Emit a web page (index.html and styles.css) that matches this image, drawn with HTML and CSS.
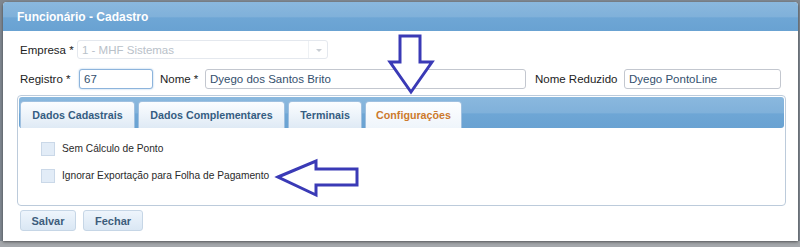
FILE: index.html
```html
<!DOCTYPE html>
<html lang="pt-BR">
<head>
    <meta charset="UTF-8">
    <title>Funcionário - Cadastro</title>
    <link rel="stylesheet" href="styles.css">
</head>
<body>
    <div class="window">
        <div class="title">Funcionário - Cadastro</div>
        <div class="form">
            <div class="row row-empresa">
                <label class="lbl lbl-empresa">Empresa *</label>
                <div class="select disabled">
                    <span>1 - MHF Sistemas</span>
                    <span class="trigger"></span>
                </div>
            </div>
            <div class="row row-registro">
                <label class="lbl lbl-registro">Registro *</label>
                <input class="field f-registro focus" value="67">
                <label class="lbl lbl-nome">Nome *</label>
                <input class="field f-nome" value="Dyego dos Santos Brito">
                <label class="lbl lbl-reduzido">Nome Reduzido</label>
                <input class="field f-reduzido" value="Dyego PontoLine">
            </div>

            <div class="tabpanel">
                <div class="tabbar">
                    <div class="tab t1">Dados Cadastrais</div>
                    <div class="tab t2">Dados Complementares</div>
                    <div class="tab t3">Terminais</div>
                    <div class="tab t4 active">Configurações</div>
                </div>
                <div class="tabbody">
                    <div class="check"><span class="box"></span>Sem Cálculo de Ponto</div>
                    <div class="check"><span class="box"></span>Ignorar Exportação para Folha de Pagamento</div>
                </div>
            </div>

            <div class="buttons">
                <button class="btn btn-salvar">Salvar</button>
                <button class="btn btn-fechar">Fechar</button>
            </div>
        </div>

        <!-- setas de destaque -->
        <svg class="arrow arrow-down" width="52" height="64" viewBox="0 0 52 64">
            <polygon points="15,4 35,4 35,30 47,30 26,60 5,30 15,30" fill="#fff" stroke="#3a3ab6" stroke-width="3" stroke-linejoin="miter"/>
        </svg>
        <svg class="arrow arrow-left" width="88" height="42" viewBox="0 0 88 42">
            <polygon points="5,20 43,4 43,12 84,12 84,28 43,28 43,38" fill="#fff" stroke="#3a3ab6" stroke-width="3" stroke-linejoin="miter"/>
        </svg>
    </div>
    <div class="behind"></div>
</body>
</html>
```

FILE: styles.css
```css
body {
    margin: 0;
    background: #7f8790;
    font-family: "Liberation Sans", Arial, sans-serif;
    font-size: 11.5px;
    width: 800px;
    height: 247px;
    overflow: hidden;
}
.window {
    position: relative;
    margin: 2px 3px 0 3px;
    width: 795px;
    height: 239px;
    background: #fff;
    border-radius: 4px 4px 0 0;
    box-shadow: 0 1px 3px rgba(0, 0, 0, 0.5);
    overflow: hidden;
}
.title {
    height: 29px;
    line-height: 30px;
    padding-left: 14px;
    color: #fff;
    font-weight: bold;
    font-size: 12px;
    background: linear-gradient(#8ab8de, #80b1da 50%, #6ea6d5 55%, #69a2d2);
}
.form {
    padding: 0 12px 0 14px;
}
.row {
    display: flex;
    align-items: center;
    padding-left: 3px;
}
.row-empresa {
    margin-top: 9px;
    height: 19px;
}
.row-registro {
    margin-top: 10px;
    height: 20px;
}
.lbl {
    color: #222;
}
.lbl-empresa {
    width: 57px;
}
.lbl-registro {
    width: 59px;
}
.lbl-nome {
    margin-left: 7px;
    width: 45px;
}
.lbl-reduzido {
    margin-left: 9px;
    width: 89px;
}
.select {
    width: 251px;
    height: 19px;
    box-sizing: border-box;
    border: 1px solid #e4e8ee;
    border-radius: 3px;
    display: flex;
    align-items: center;
    padding-left: 4px;
    color: #b9c1c9;
    position: relative;
}
.select .trigger {
    position: absolute;
    right: 0;
    top: 0;
    bottom: 0;
    width: 18px;
    border-left: 1px solid #eef1f4;
}
.select .trigger::after {
    content: "";
    position: absolute;
    left: 7px;
    top: 8px;
    border: 3px solid transparent;
    border-top-color: #c8cdd3;
}
.field {
    height: 20px;
    box-sizing: border-box;
    border: 1px solid #c3c7cf;
    border-radius: 3px;
    padding: 0 4px;
    font-family: inherit;
    font-size: 11.5px;
    color: #34506e;
    background: #fff;
    outline: none;
}
.field.focus {
    border-color: #8db4dc;
    box-shadow: 0 0 2px #9cc0e4;
}
.f-registro {
    width: 74px;
}
.f-nome {
    width: 321px;
}
.f-reduzido {
    width: 157px;
}
.tabpanel {
    margin-top: 6px;
    width: 769px;
    height: 111px;
    box-sizing: border-box;
    border: 1px solid #bccbdb;
    border-radius: 4px;
    padding: 1px;
}
.tabbar {
    height: 31px;
    box-sizing: border-box;
    border-radius: 3px;
    background: linear-gradient(#8ab8de, #80b1da 50%, #6ea6d5 55%, #69a2d2);
    display: flex;
    align-items: flex-end;
    padding-left: 1px;
    gap: 3px;
}
.tab {
    height: 27px;
    box-sizing: border-box;
    text-align: center;
    line-height: 27px;
    font-weight: bold;
    font-size: 10.7px;
    color: #355d82;
    border: 1px solid #9fc0e0;
    border-bottom: none;
    border-radius: 4px 4px 0 0;
    background: linear-gradient(#fbfdff, #dfeaf5);
}
.t1 {
    width: 115px;
}
.t2 {
    width: 147px;
}
.t3 {
    width: 74px;
}
.t4 {
    width: 97px;
}
.tab.active {
    color: #cc7a2c;
    background: linear-gradient(#fdfeff, #eff5fb);
}
.tabbody {
    padding: 13px 0 0 22px;
}
.check {
    display: flex;
    align-items: center;
    height: 15px;
    margin-bottom: 12px;
    font-size: 10.2px;
    color: #2a2a2a;
}
.box {
    width: 14px;
    height: 14px;
    box-sizing: border-box;
    border: 1px solid #cad8e8;
    background: #e2ecf7;
    margin-right: 7px;
}
.buttons {
    display: flex;
    gap: 7px;
    margin-top: 4px;
    padding-left: 3px;
}
.btn {
    height: 21px;
    box-sizing: border-box;
    border: 1px solid #c6d6e6;
    border-radius: 3px;
    background: linear-gradient(#eef5fc, #dae7f4);
    font-family: inherit;
    font-weight: bold;
    font-size: 11px;
    color: #3d5d7c;
    padding: 0;
}
.btn-salvar {
    width: 56px;
}
.btn-fechar {
    width: 60px;
}
.arrow {
    position: absolute;
}
.arrow-down {
    left: 382px;
    top: 30px;
}
.arrow-left {
    left: 270px;
    top: 155px;
}
.behind {
    height: 6px;
    background: #a4a7ab;
}
```
